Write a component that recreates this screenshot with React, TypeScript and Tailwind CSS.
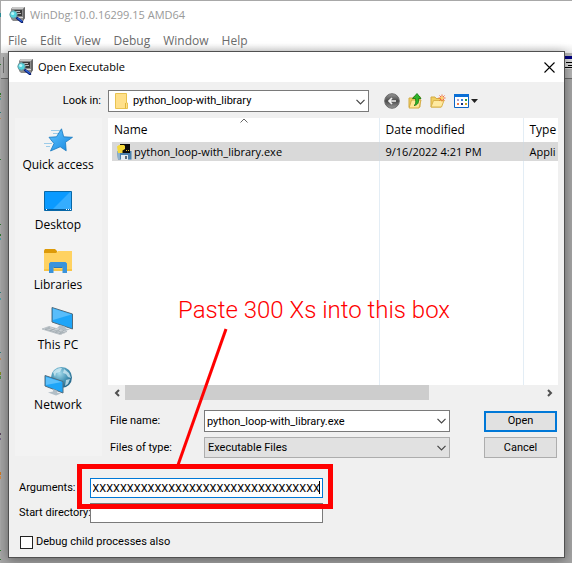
import { useEffect, useRef } from "react";
import type { ReactNode } from "react";

const specks = [
  { y: 12, c: "#2a8a94", h: 4 },
  { y: 63, c: "#2f7a2f", h: 1 },
  { y: 92, c: "#2f7a2f", h: 2 },
  { y: 95, c: "#6d8f3a", h: 1 },
  { y: 97, c: "#5fa0a0", h: 2 },
  { y: 111, c: "#2f7f7f", h: 1 },
  { y: 117, c: "#c08a5a", h: 1 },
  { y: 158, c: "#2f7a2f", h: 1 },
  { y: 223, c: "#2f7a2f", h: 1 },
  { y: 233, c: "#2f7a2f", h: 2 },
  { y: 237, c: "#4fa0a8", h: 2 },
  { y: 291, c: "#2f7f7f", h: 1 },
  { y: 297, c: "#4fa0a8", h: 2 },
  { y: 351, c: "#2f7f7f", h: 1 },
  { y: 357, c: "#c08a5a", h: 2 },
  { y: 371, c: "#808a20", h: 3 },
  { y: 375, c: "#4f8a50", h: 3 },
  { y: 432, c: "#5a4560", h: 2 },
  { y: 437, c: "#76688a", h: 2 },
  { y: 471, c: "#d07820", h: 3 },
  { y: 475, c: "#d98a40", h: 3 },
  { y: 549, c: "#2f7a2f", h: 1 },
  { y: 558, c: "#2f7a2f", h: 1 },
];

function DebuggerIcon() {
  return (
    <svg width="16" height="16" viewBox="0 0 16 16" className="shrink-0" aria-hidden="true">
      <path d="M2 1.500 4 0h12v11l-2 3H4L2 12z" fill="#8b8b8b" />
      <path d="M4 0h12l-2 2H2z" fill="#c9c9c9" />
      <path d="M14 2l2-2v11l-2 3z" fill="#686868" />
      <path d="M5 3h8v6H5z" fill="#3a3a3a" />
      <path d="M6 4.500h5M8 6.500h4" stroke="#b9b9b9" />
      <path d="M9 10.500h5" stroke="#d8d8d8" />
      <path d="M8 11l5 4" stroke="#0b1f6e" strokeWidth="2.400" strokeLinecap="round" />
      <path d="M8.500 11l4.500 3.500" stroke="#2b63e0" strokeWidth="1.200" />
      <circle cx="4.500" cy="7.500" r="3.700" fill="#52d3dd" stroke="#6a9aa2" />
      <circle cx="3.700" cy="6.500" r="1.600" fill="#b8f6fa" />
    </svg>
  );
}

function FolderIcon() {
  return (
    <svg width="13" height="16" viewBox="0 0 13 16" aria-hidden="true">
      <path d="M.5.5h11v9.500h1v5.500H.5z" fill="#ffe08a" stroke="#e9c351" />
      <path d="M10.500 10v5.500" stroke="#e0b63c" />
    </svg>
  );
}

function Chevron() {
  return (
    <svg width="9" height="6" viewBox="0 0 9 6" fill="none" stroke="#444" strokeWidth="1.200" aria-hidden="true">
      <path d="M.5.8 4.500 4.800 8.500.8" />
    </svg>
  );
}

function BackIcon() {
  return (
    <svg width="16" height="16" viewBox="0 0 16 16" aria-hidden="true">
      <defs>
        <linearGradient id="back" x1="0" y1="0" x2="0" y2="1">
          <stop offset="0" stopColor="#9a9a9a" />
          <stop offset=".5" stopColor="#4a4a4a" />
          <stop offset="1" stopColor="#9a9a9a" />
        </linearGradient>
      </defs>
      <circle cx="8" cy="8" r="7.300" fill="url(#back)" stroke="#6b6b6b" />
      <path d="M12 8H5M8 5 5 8l3 3" fill="none" stroke="#f2f2f2" strokeWidth="1.700" />
    </svg>
  );
}

function UpIcon() {
  return (
    <svg width="14" height="16" viewBox="0 0 14 16" aria-hidden="true">
      <path d="M1 5h4l1-1.500h6V14H1z" fill="#f0cf62" stroke="#d3ab43" />
      <path d="M3.500 7H13l-2 8H1z" fill="#ffe798" stroke="#d3ab43" />
      <path d="M6 12.500c2-1 2-3 1.500-7H4.500L9 .5l4 5h-2.500c.5 4-.5 6.500-4.500 7z" fill="#2fb52a" stroke="#12740f" strokeWidth=".8" />
    </svg>
  );
}

function NewFolderIcon() {
  return (
    <svg width="16" height="14" viewBox="0 0 16 14" aria-hidden="true">
      <path d="M1 3h4l1 1.500h5V13H1z" fill="#f0cf62" stroke="#d3ab43" />
      <path d="M3.500 6.500H14L11.500 13H1z" fill="#ffeaa0" stroke="#d9b34c" />
      <path d="M12 .5v7M8.500 4h7M9.500 1.500l5 5M14.500 1.500l-5 5" stroke="#f2602f" strokeWidth=".9" />
      <circle cx="12" cy="4" r="1.400" fill="#ffd36a" />
    </svg>
  );
}

function ViewsIcon() {
  return (
    <svg width="24" height="14" viewBox="0 0 24 14" aria-hidden="true">
      <path d="M.5.5h14v13H.5z" fill="#fff" stroke="#0a63c4" />
      <path d="M0 0h15v3H0z" fill="#0a6fd6" />
      <path d="M3 5h2v2H3z" fill="#a8a0d0" />
      <path d="M7 5h2v2H7z" fill="#3a7edc" />
      <path d="M11 5h2v2h-2z" fill="#2c9a3c" />
      <path d="M3 9h2v2H3z" fill="#ee7a4a" />
      <path d="M7 9h2v2H7z" fill="#14307e" />
      <path d="M11 9h2v2h-2z" fill="#d2a520" />
      <path d="M17 5h7l-3.500 4z" fill="#222" />
    </svg>
  );
}

function PythonFileIcon() {
  return (
    <svg width="16" height="16" viewBox="0 0 16 16" aria-hidden="true">
      <path d="M1 7h14.500v8.500H2z" fill="#4a80ad" />
      <path d="M1 7h3v8H2z" fill="#8fb2cc" />
      <path d="M5 11h7v5H5z" fill="#e6edf2" />
      <path d="M9 12h2v3H9z" fill="#5a6a78" />
      <path d="M4 0h10v9H4z" fill="#0c0c0c" />
      <path d="M1 2.500 3 1h5l1 1v3L6.500 6.500V9H2z" fill="#f5d83a" />
      <path d="M10 6.500h3" stroke="#e9c531" strokeDasharray="1 1" />
    </svg>
  );
}

function StarIcon() {
  return (
    <svg width="30" height="26" viewBox="0 0 30 26" aria-hidden="true">
      <defs>
        <linearGradient id="star" x1="0" y1="0" x2="1" y2="1">
          <stop offset="0" stopColor="#63c4ff" />
          <stop offset="1" stopColor="#1487e0" />
        </linearGradient>
      </defs>
      <path d="M8 2.500h9M10 5.500h7M1 15.500h8M3 18.500h4M8 12.500h3" stroke="#9ccbe8" />
      <path d="m18.500.8 2.200 8 8.800.5-7 5 .7 8.500-6-4L7.500 23 11 15.500 6 9.300l7.500-.5z" fill="url(#star)" stroke="#1878bf" strokeWidth=".8" />
    </svg>
  );
}

function DesktopIcon() {
  return (
    <svg width="28" height="20" viewBox="0 0 28 20" aria-hidden="true">
      <path d="M.5.5h27v19H.5z" fill="#0a9aff" stroke="#0868a8" />
      <path d="M27 1v17H9L26 1z" fill="#35adff" />
      <path d="M1 18.500h26" stroke="#075f9f" />
      <path d="M2 18.500h1M22 18.500h1M24 18.500h1M26 18.500h1" stroke="#fff" />
    </svg>
  );
}

function LibrariesIcon() {
  return (
    <svg width="28" height="24" viewBox="0 0 28 24" aria-hidden="true">
      <path d="M0 1.500 1 0h10l2 2v4H0z" fill="#dd9a08" />
      <path d="M0 4h12l2-2h14v20H0z" fill="#ffd261" />
      <path d="M0 20h28v2H0z" fill="#f8c444" />
      <path d="M5 14.500 6.500 13h15l1.500 1.500V24h-4.500v-6h-9v6H5z" fill="#3993dc" />
      <path d="M9.500 18h9v1h-9z" fill="#2778bb" />
    </svg>
  );
}

function ThisPcIcon() {
  return (
    <svg width="32" height="28" viewBox="0 0 32 28" aria-hidden="true">
      <path d="M10 .5 30.500 7v15L10 15z" fill="#1ea5f8" stroke="#526c7c" />
      <path d="M11 1.500 29.500 7.500 11 13z" fill="#58bdfb" />
      <path d="m18 18 5 1.500 1 2 4 1-5 1.500-8-3z" fill="#b3bfc7" />
      <path d="m0 22 7-2.500 18 5-7 3z" fill="#cfd5d9" stroke="#a9b2b8" strokeWidth=".7" />
      <path d="m3 22 17 5M5.500 21l17 5M8 20l-5 2.500M13 21.500 8 24M18 22.500l-5 3M22 23.500l-5 3" stroke="#9aa3a9" strokeWidth=".7" />
    </svg>
  );
}

function NetworkIcon() {
  return (
    <svg width="28" height="29" viewBox="0 0 28 29" aria-hidden="true">
      <defs>
        <radialGradient id="globe" cx=".4" cy=".3" r=".75">
          <stop offset="0" stopColor="#a7dcec" />
          <stop offset=".55" stopColor="#4593b4" />
          <stop offset="1" stopColor="#1f5e82" />
        </radialGradient>
      </defs>
      <circle cx="17.500" cy="10.500" r="10.500" fill="url(#globe)" />
      <path d="M9 5c3-3 6-4.500 9-4l-2 4-4 1-1 4zM20 2l5 4 2 5-3-1-2-3-3-1zM22 13l4-1-2 5-3 2z" fill="#d5eef5" opacity=".75" />
      <path d="M1 8.500 19 14.500V26L1 19z" fill="#1ea5f8" stroke="#526c7c" />
      <path d="M2 10l16 5-16 3z" fill="#5cc0fb" />
      <path d="m9 22 4 1.500v2l4 1-5 2-8-3 5-1z" fill="#b3bfc7" />
    </svg>
  );
}

const places: { label: string; icon: ReactNode }[] = [
  { label: "Quick access", icon: <StarIcon /> },
  { label: "Desktop", icon: <DesktopIcon /> },
  { label: "Libraries", icon: <LibrariesIcon /> },
  { label: "This PC", icon: <ThisPcIcon /> },
  { label: "Network", icon: <NetworkIcon /> },
];

export default function App() {
  const args = useRef<HTMLInputElement>(null);
  useEffect(() => {
    if (args.current) args.current.scrollLeft = args.current.scrollWidth;
  }, []);

  return (
    <div className="relative flex min-h-screen flex-col border-t border-l border-[#a8a8a8] bg-[#a9a9a9] font-['Open_Sans',sans-serif] text-[11px] leading-4 text-black">
      {specks.map((s) => (
        <div key={s.y} className="absolute -left-px w-px" style={{ top: s.y, height: s.h, background: s.c }} />
      ))}
      <header className="bg-white">
        <div className="flex h-7 items-center gap-[5px] pl-2 text-[#999]">
          <DebuggerIcon />
          <span>WinDbg:10.0.16299.15 AMD64</span>
        </div>
        <nav className="flex h-6 items-center gap-[11px] bg-linear-to-b from-white from-60% to-[#ececec] pl-1.5 text-[12px] text-[#6b6b6b]">
          {["File", "Edit", "View", "Debug", "Window", "Help"].map((m) => (
            <button key={m} className="px-px">{m}</button>
          ))}
        </nav>
      </header>

      <main className="relative grow border-b border-[#a8a8a8] bg-[#a4a4a4] pr-[7px] pb-[5px] pl-[7px]">
        <div className="absolute inset-x-0 top-0 h-[26px] border-b border-[#6a6a6a] bg-[#b4b4b4]">
          <div className="absolute top-1 left-[2px] h-4 w-px bg-[#707070]" />
          <div className="absolute top-[3px] right-0 h-[3px] w-2 bg-[#000080]" />
          <div className="absolute top-[6px] right-0 h-[10px] w-2 bg-[#dcdcdc]" />
          <div className="absolute top-[9px] right-0 h-px w-[6px] bg-black" />
          <div className="absolute top-[12px] right-0 h-px w-[4px] bg-black" />
          <div className="absolute top-[14px] right-0 h-px w-[7px] bg-black" />
        </div>

        <section
          role="dialog"
          aria-label="Open Executable"
          className="relative top-[-2px] -mb-[2px] border border-[#505050] bg-[#f0f0f0] pb-[7px] shadow-[0_2px_10px_rgba(0,0,0,0.4)]"
        >
          <div className="flex h-[30px] items-center gap-[5px] bg-white pr-2 pl-2">
            <DebuggerIcon />
            <h1 className="grow">Open Executable</h1>
            <button aria-label="Close" className="p-px">
              <svg width="11" height="11" viewBox="0 0 11 11" stroke="#000" strokeWidth="1.100" aria-hidden="true">
                <path d="m.5.5 10 10M10.500.5l-10 10" />
              </svg>
            </button>
          </div>

          <div className="flex h-9 items-center pt-px font-['Roboto',sans-serif]">
            <label htmlFor="look" className="w-[92px] text-right">Look in:</label>
            <div className="relative ml-[7px] w-[261px]">
              <select id="look" className="block h-[22px] w-full appearance-none border border-[#7a7a7a] bg-white pl-6 font-['Roboto',sans-serif]">
                <option>python_loop-with_library</option>
              </select>
              <div className="pointer-events-none absolute top-[3px] left-[7px]"><FolderIcon /></div>
              <div className="pointer-events-none absolute top-[9px] right-1"><Chevron /></div>
            </div>
            <div className="ml-[15px] flex items-center gap-2">
              <button aria-label="Back"><BackIcon /></button>
              <button aria-label="Up one level"><UpIcon /></button>
              <button aria-label="New folder"><NewFolderIcon /></button>
              <button aria-label="Views"><ViewsIcon /></button>
            </div>
          </div>

          <div className="flex pr-1.5 pl-1.5">
            <nav aria-label="Places" className="h-[338px] w-[87px] shrink-0 bg-[#f3f3f3] pt-[7px] pr-px">
              {places.map((p) => (
                <button key={p.label} className="flex h-[60px] w-full flex-col items-center text-[12px] whitespace-nowrap">
                  <span className="flex h-8 items-center">{p.icon}</span>
                  <span>{p.label}</span>
                </button>
              ))}
            </nav>

            <div className="ml-1.5 min-w-0 grow">
              <div className="relative h-[267px] overflow-hidden bg-white pl-1">
                <svg className="absolute top-0 left-[132px]" width="8" height="5" viewBox="0 0 8 5" fill="none" stroke="#666" aria-hidden="true">
                  <path d="M.5 4.500 4 1l3.500 3.500" />
                </svg>
                <table className="h-full w-full table-fixed text-left text-[12px] whitespace-nowrap">
                  <thead>
                    <tr className="h-6">
                      <th className="w-[267px] pl-0.5 font-normal">Name</th>
                      <th className="w-36 border-l border-[#e3edf5] pl-1.5 font-normal">Date modified</th>
                      <th className="overflow-hidden border-l border-[#e3edf5] pl-1.5 font-normal">Type</th>
                    </tr>
                  </thead>
                  <tbody>
                    <tr className="h-[19px] bg-[#d9d9d9] text-[11px]">
                      <td>
                        <span className="flex items-center gap-0.5 pl-1"><PythonFileIcon />python_loop-with_library.exe</span>
                      </td>
                      <td className="border-l border-[#d3d9de] pl-1.5">9/16/2022 4:21 PM</td>
                      <td className="border-l border-[#d3d9de] pl-1.5">Appli</td>
                    </tr>
                    <tr>
                      <td />
                      <td className="border-l border-[#e3edf5]" />
                      <td className="border-l border-[#e3edf5]" />
                    </tr>
                  </tbody>
                </table>
              </div>
              <div className="flex h-[15px] items-center">
                <button aria-label="Scroll left" className="flex w-[17px] justify-center">
                  <svg width="6" height="8" viewBox="0 0 6 8" fill="none" stroke="#505050" strokeWidth="2" aria-hidden="true"><path d="M5 1 2 4l3 3" /></svg>
                </button>
                <div className="h-full grow"><div className="h-full w-[73%] bg-[#cdcdcd]" /></div>
                <button aria-label="Scroll right" className="flex w-[17px] justify-center">
                  <svg width="6" height="8" viewBox="0 0 6 8" fill="none" stroke="#505050" strokeWidth="2" aria-hidden="true"><path d="m1 1 3 3-3 3" /></svg>
                </button>
              </div>

              <div className="mt-2.5 flex flex-col gap-[5px] pr-px pl-0.5 font-['Roboto',sans-serif]">
                <div className="flex items-center">
                  <label htmlFor="file" className="w-[94px]">File name:</label>
                  <div className="relative w-[246px]">
                    <input id="file" defaultValue="python_loop-with_library.exe" className="block h-[22px] w-full border border-[#7a7a7a] bg-white px-0.5" />
                    <button aria-label="Recent files" className="absolute top-2 right-1"><Chevron /></button>
                  </div>
                  <button className="ml-auto h-[21px] w-[73px] border-2 border-[#0078d7] bg-[#e1e1e1]">Open</button>
                </div>
                <div className="flex items-center">
                  <label htmlFor="type" className="w-[94px]">Files of type:</label>
                  <div className="relative w-[246px]">
                    <select id="type" className="block h-[21px] w-full appearance-none border border-[#adadad] bg-[#e1e1e1] px-[3px]">
                      <option>Executable Files</option>
                    </select>
                    <div className="pointer-events-none absolute top-2 right-1"><Chevron /></div>
                  </div>
                  <button className="ml-auto h-[21px] w-[73px] border border-[#adadad] bg-[#e1e1e1]">Cancel</button>
                </div>
              </div>
            </div>
          </div>

          <form className="mt-5 flex flex-col gap-[5px] pl-[10px] font-['Roboto',sans-serif]">
            <div className="flex items-center">
              <label htmlFor="args" className="w-[71px]">Arguments:</label>
              <div className="relative w-[233px]">
                <input ref={args} id="args" defaultValue={"X".repeat(300)} className="block h-5 w-full border border-[#0078d7] bg-white px-0.5" />
                <div className="absolute top-[3px] right-[3px] h-[13px] w-px bg-black" />
                <div className="pointer-events-none absolute -top-[14px] -right-[10px] -bottom-[11px] -left-[13px] z-10 border-5 border-[#f00]" />
                <svg className="pointer-events-none absolute bottom-[31px] left-[84px] z-10" width="56" height="140" viewBox="0 0 56 140" aria-hidden="true">
                  <path d="M52 2 4 138" stroke="#f00" strokeWidth="3" />
                </svg>
              </div>
            </div>
            <div className="flex items-center">
              <label htmlFor="dir" className="w-[71px] whitespace-nowrap">Start directory:</label>
              <input id="dir" className="block h-5 w-[233px] border border-[#7a7a7a] bg-white px-0.5" />
            </div>
            <label className="mt-1.5 flex items-center gap-[3px] pl-px">
              <input type="checkbox" className="size-[13px] appearance-none border border-[#222] bg-white" />
              Debug child processes also
            </label>
          </form>

          <p className="pointer-events-none absolute top-[242px] left-[169px] font-['Roboto',sans-serif] text-[24px] leading-8 font-light whitespace-nowrap text-[#f00]">
            Paste 300 Xs into this box
          </p>
        </section>
      </main>
    </div>
  );
}
